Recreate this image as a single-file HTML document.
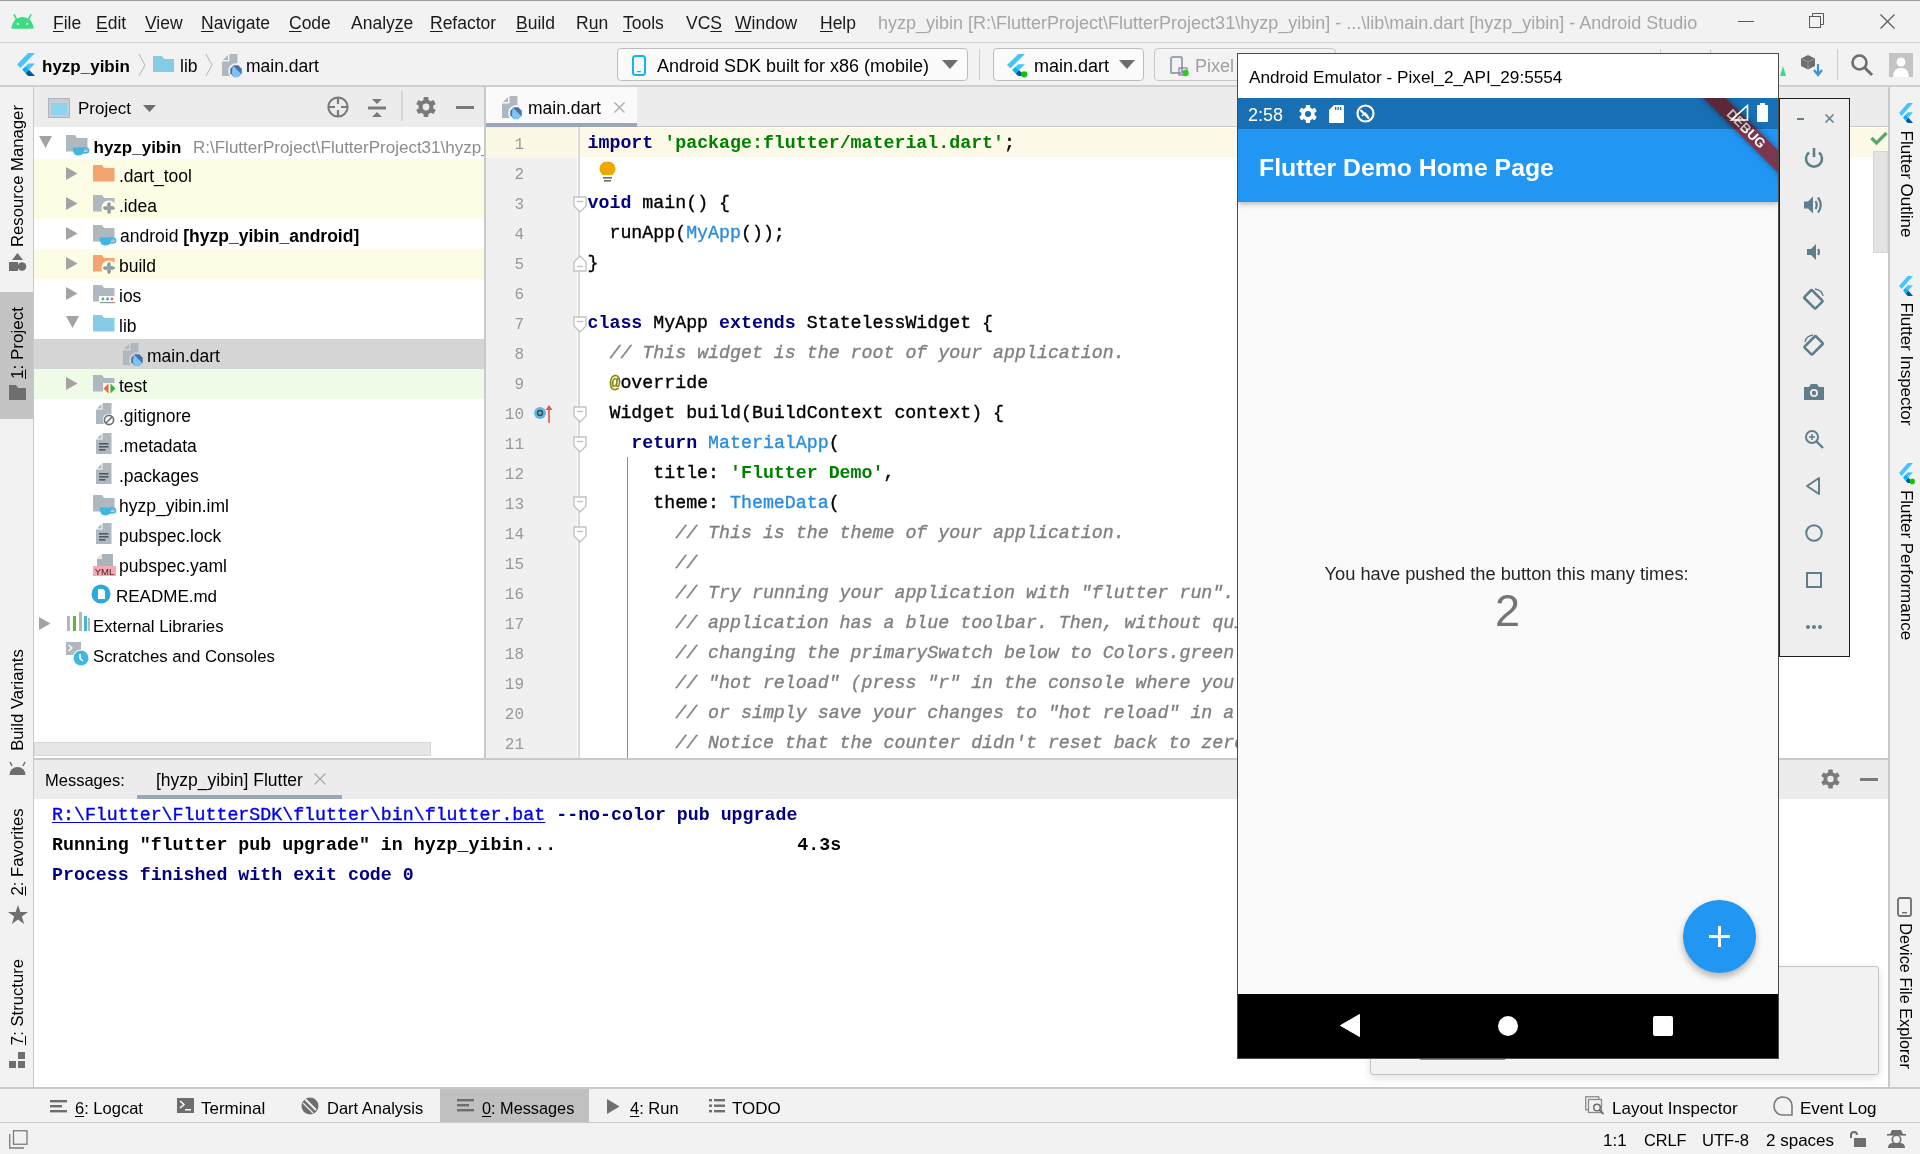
<!DOCTYPE html>
<html><head><meta charset="utf-8">
<style>
*{margin:0;padding:0;box-sizing:border-box}
html,body{width:1920px;height:1154px;overflow:hidden;background:#f2f2f2;font-family:"Liberation Sans",sans-serif;color:#000}
.a{position:absolute}
.t{position:absolute;white-space:pre}
.u{text-decoration:underline;text-decoration-thickness:1px;text-underline-offset:2px}
svg{position:absolute;overflow:visible}
#root{position:absolute;left:0;top:0;width:1920px;height:1154px;overflow:hidden;will-change:transform}
</style></head><body><div id="root">
<div class="a" style="left:0px;top:0px;width:1920px;height:1px;background:#9a9a9a;"></div>
<div class="a" style="left:0px;top:1px;width:1920px;height:41px;background:#f2f2f2;"></div>
<div class="a" style="left:0px;top:42px;width:1920px;height:1px;background:#d4d4d4;"></div>
<div class="a" style="left:0px;top:85px;width:1920px;height:2px;background:#cfcfcf;"></div>
<div class="a" style="left:33px;top:87px;width:1px;height:1001px;background:#c9c9c9;"></div>
<div class="a" style="left:0px;top:292px;width:33px;height:127px;background:#c4c4c4;"></div>
<div class="a" style="left:34px;top:87px;width:450px;height:40px;background:#ececec;"></div>
<div class="a" style="left:34px;top:127px;width:450px;height:631px;background:#fff;"></div>
<div class="a" style="left:484px;top:87px;width:2px;height:671px;background:#c9c9c9;"></div>
<div class="a" style="left:486px;top:87px;width:1402px;height:40px;background:#ececec;"></div>
<div class="a" style="left:486px;top:126px;width:1402px;height:1px;background:#c9c9c9;"></div>
<div class="a" style="left:486px;top:87px;width:151px;height:36px;background:#fafafa;"></div>
<div class="a" style="left:486px;top:123px;width:151px;height:4px;background:#9ba6b8;"></div>
<div class="a" style="left:486px;top:127px;width:1402px;height:631px;background:#fff;"></div>
<div class="a" style="left:486px;top:127px;width:91px;height:631px;background:#f0f0f0;"></div>
<div class="a" style="left:486px;top:128px;width:91px;height:30px;background:#fcf8e6;"></div>
<div class="a" style="left:580px;top:128px;width:1308px;height:29px;background:#fdf9e8;"></div>
<div class="a" style="left:578px;top:127px;width:2px;height:631px;background:#d9d9d9;"></div>
<div class="a" style="left:1888px;top:87px;width:2px;height:1001px;background:#c9c9c9;"></div>
<div class="a" style="left:34px;top:758px;width:1854px;height:2px;background:#c9c9c9;"></div>
<div class="a" style="left:34px;top:760px;width:1854px;height:39px;background:#ececec;"></div>
<div class="a" style="left:34px;top:799px;width:1854px;height:289px;background:#fff;"></div>
<div class="a" style="left:137px;top:795px;width:205px;height:4px;background:#9ba6b8;"></div>
<div class="a" style="left:0px;top:1087px;width:1920px;height:2px;background:#c9c9c9;"></div>
<div class="a" style="left:440px;top:1089px;width:149px;height:33px;background:#c0c0c0;"></div>
<div class="a" style="left:0px;top:1122px;width:1920px;height:1px;background:#c9c9c9;"></div>
<svg style="left:11px;top:13px;" width="24" height="17" viewBox="0 0 24 17"><path d="M0.3 15.8 C0.8 9 5.5 4 11.5 4 C17.5 4 22.2 9 22.7 15.8 Z" fill="#3ddc84"/><line x1="5.6" y1="6.5" x2="3.2" y2="1.8" stroke="#3ddc84" stroke-width="1.7" stroke-linecap="round"/><line x1="17.4" y1="6.5" x2="19.8" y2="1.8" stroke="#3ddc84" stroke-width="1.7" stroke-linecap="round"/><circle cx="6.8" cy="10.8" r="1.1" fill="#fff"/><circle cx="16.2" cy="10.8" r="1.1" fill="#fff"/></svg>
<div class="t" style="left:53px;top:13px;font-size:17.5px;line-height:20px;color:#1a1a1a;font-weight:normal;font-family:'Liberation Sans';"><span class="u">F</span>ile</div>
<div class="t" style="left:96px;top:13px;font-size:17.5px;line-height:20px;color:#1a1a1a;font-weight:normal;font-family:'Liberation Sans';"><span class="u">E</span>dit</div>
<div class="t" style="left:145px;top:13px;font-size:17.5px;line-height:20px;color:#1a1a1a;font-weight:normal;font-family:'Liberation Sans';"><span class="u">V</span>iew</div>
<div class="t" style="left:201px;top:13px;font-size:17.5px;line-height:20px;color:#1a1a1a;font-weight:normal;font-family:'Liberation Sans';"><span class="u">N</span>avigate</div>
<div class="t" style="left:289px;top:13px;font-size:17.5px;line-height:20px;color:#1a1a1a;font-weight:normal;font-family:'Liberation Sans';"><span class="u">C</span>ode</div>
<div class="t" style="left:351px;top:13px;font-size:17.5px;line-height:20px;color:#1a1a1a;font-weight:normal;font-family:'Liberation Sans';">Analy<span class="u">z</span>e</div>
<div class="t" style="left:430px;top:13px;font-size:17.5px;line-height:20px;color:#1a1a1a;font-weight:normal;font-family:'Liberation Sans';"><span class="u">R</span>efactor</div>
<div class="t" style="left:516px;top:13px;font-size:17.5px;line-height:20px;color:#1a1a1a;font-weight:normal;font-family:'Liberation Sans';"><span class="u">B</span>uild</div>
<div class="t" style="left:576px;top:13px;font-size:17.5px;line-height:20px;color:#1a1a1a;font-weight:normal;font-family:'Liberation Sans';">R<span class="u">u</span>n</div>
<div class="t" style="left:623px;top:13px;font-size:17.5px;line-height:20px;color:#1a1a1a;font-weight:normal;font-family:'Liberation Sans';"><span class="u">T</span>ools</div>
<div class="t" style="left:686px;top:13px;font-size:17.5px;line-height:20px;color:#1a1a1a;font-weight:normal;font-family:'Liberation Sans';">VC<span class="u">S</span></div>
<div class="t" style="left:735px;top:13px;font-size:17.5px;line-height:20px;color:#1a1a1a;font-weight:normal;font-family:'Liberation Sans';"><span class="u">W</span>indow</div>
<div class="t" style="left:820px;top:13px;font-size:17.5px;line-height:20px;color:#1a1a1a;font-weight:normal;font-family:'Liberation Sans';"><span class="u">H</span>elp</div>
<div class="t" style="left:878px;top:13px;font-size:18px;line-height:20px;color:#a6a6a6;font-weight:normal;font-family:'Liberation Sans';">hyzp_yibin [R:\FlutterProject\FlutterProject31\hyzp_yibin] - ...\lib\main.dart [hyzp_yibin] - Android Studio</div>
<div class="a" style="left:1738px;top:21px;width:16px;height:1px;background:#5a5a5a;"></div>
<svg style="left:1809px;top:13px;" width="16" height="16" viewBox="0 0 16 16"><rect x="0.5" y="3.5" width="11" height="11" fill="none" stroke="#5a5a5a" stroke-width="1"/><path d="M3.5 3.5 V0.5 H14.5 V11.5 H11.5" fill="none" stroke="#5a5a5a" stroke-width="1"/></svg>
<svg style="left:1880px;top:14px;" width="15" height="15" viewBox="0 0 15 15"><path d="M0.5 0.5 L14.5 14.5 M14.5 0.5 L0.5 14.5" stroke="#5a5a5a" stroke-width="1.2"/></svg>
<svg style="left:17px;top:53px" width="18" height="23" viewBox="9.8 10 146.8 182.2" preserveAspectRatio="none"><path d="M37.7 128.9 L9.8 101 L100.8 10 L156.6 10 Z" fill="#47c5fb"/><path d="M156.6 94 L100.8 94 L79.6 115.2 L107.5 143.1 Z" fill="#47c5fb"/><path d="M79.6 171 L100.8 192.2 L156.6 192.2 L107.5 143.1 Z" fill="#00569e"/><path d="M51.6 143.1 L79.6 115.2 L107.5 143.1 L79.6 171 Z" fill="#00b5f8"/></svg>
<div class="t" style="left:42px;top:57px;font-size:17px;line-height:20px;color:#000;font-weight:bold;font-family:'Liberation Sans';">hyzp_yibin</div>
<svg style="left:138px;top:54px;" width="8" height="22" viewBox="0 0 8 22"><path d="M1 0 L7 11 L1 22" fill="none" stroke="#b4b4b4" stroke-width="1"/></svg>
<svg style="left:153px;top:56px;" width="21" height="16" viewBox="0 0 21 16"><path d="M0 0 H8.8 L11.6 2.9 H21 V16 H0 Z" fill="#87cce6"/></svg>
<div class="t" style="left:180px;top:56px;font-size:17.5px;line-height:20px;color:#000;font-weight:normal;font-family:'Liberation Sans';">lib</div>
<svg style="left:205px;top:54px;" width="8" height="22" viewBox="0 0 8 22"><path d="M1 0 L7 11 L1 22" fill="none" stroke="#b4b4b4" stroke-width="1"/></svg>
<svg style="left:222px;top:54px;" width="22" height="23" viewBox="0 0 22 23"><path d="M1 6 L6 1 V6 Z" fill="#afb8bf"/><path d="M7.5 0 H15.5 V22 H0 V7.5 H7.5 Z" fill="#afb8bf"/><circle cx="14" cy="17" r="7.800000000000001" fill="#f2f2f2"/><polygon points="19.73,19.37 16.37,22.73 11.63,22.73 8.27,19.37 8.27,14.63 11.63,11.27 16.37,11.27 19.73,14.63" fill="#4d6fa8"/><path d="M10.8 11.6 L19.4 20.2 L16.4 23.2 L11.6 23.2 L9.8 19 Z" fill="#7cc3f8"/></svg>
<div class="t" style="left:246px;top:56px;font-size:17.5px;line-height:20px;color:#000;font-weight:normal;font-family:'Liberation Sans';">main.dart</div>
<div class="a" style="left:617px;top:48px;width:351px;height:33px;background:#fbfbfb;border:1px solid #bdbdbd;border-radius:4px"></div>
<svg style="left:632px;top:55px;" width="14" height="21" viewBox="0 0 14 21"><rect x="1" y="1" width="12" height="19" rx="2.5" fill="none" stroke="#16b3f4" stroke-width="2"/><rect x="5" y="16" width="4" height="1.2" fill="#16b3f4"/></svg>
<div class="t" style="left:657px;top:56px;font-size:18px;line-height:20px;color:#000;font-weight:normal;font-family:'Liberation Sans';">Android SDK built for x86 (mobile)</div>
<svg style="left:942px;top:60px;" width="16" height="9" viewBox="0 0 16 9"><path d="M0 0 H16 L8 9 Z" fill="#6e6e6e"/></svg>
<div class="a" style="left:979px;top:49px;width:1px;height:31px;background:#cdcdcd;"></div>
<div class="a" style="left:993px;top:48px;width:151px;height:33px;background:#fbfbfb;border:1px solid #bdbdbd;border-radius:4px"></div>
<svg style="left:1007px;top:54px" width="18" height="22" viewBox="9.8 10 146.8 182.2" preserveAspectRatio="none"><path d="M37.7 128.9 L9.8 101 L100.8 10 L156.6 10 Z" fill="#47c5fb"/><path d="M156.6 94 L100.8 94 L79.6 115.2 L107.5 143.1 Z" fill="#47c5fb"/><path d="M79.6 171 L100.8 192.2 L156.6 192.2 L107.5 143.1 Z" fill="#00569e"/><path d="M51.6 143.1 L79.6 115.2 L107.5 143.1 L79.6 171 Z" fill="#00b5f8"/><circle cx="150" cy="178" r="26" fill="#0cc400"/></svg>
<div class="t" style="left:1034px;top:56px;font-size:18px;line-height:20px;color:#000;font-weight:normal;font-family:'Liberation Sans';">main.dart</div>
<svg style="left:1119px;top:60px;" width="16" height="9" viewBox="0 0 16 9"><path d="M0 0 H16 L8 9 Z" fill="#6e6e6e"/></svg>
<div class="a" style="left:1154px;top:48px;width:182px;height:33px;background:#f3f3f3;border:1px solid #c8c8c8;border-radius:4px"></div>
<svg style="left:1170px;top:56px;" width="20" height="21" viewBox="0 0 20 21"><path d="M3 1 H10 Q12 1 12 3 V12" fill="none" stroke="#9aa7b0" stroke-width="2"/><path d="M1 3 V16 Q1 17 3 17 H6" fill="none" stroke="#9aa7b0" stroke-width="2"/><rect x="1" y="1" width="11" height="16" rx="2" fill="none" stroke="#9aa7b0" stroke-width="2"/><rect x="9" y="12" width="8" height="7" fill="none" stroke="#9b6bc6" stroke-width="1.2"/><circle cx="15.5" cy="17" r="3.2" fill="#2ecc1c"/></svg>
<div class="t" style="left:1195px;top:56px;font-size:18px;line-height:20px;color:#a0a0a0;font-weight:normal;font-family:'Liberation Sans';">Pixel 2</div>
<div class="a" style="left:1660px;top:49px;width:1px;height:31px;background:#cdcdcd;"></div>
<div class="a" style="left:1710px;top:49px;width:1px;height:31px;background:#cdcdcd;"></div>
<svg style="left:1780px;top:66px;" width="6" height="10" viewBox="0 0 6 10"><path d="M0 10 L3 0 L6 10 Z" fill="#3ddc84"/></svg>
<svg style="left:1801px;top:55px;" width="23" height="22" viewBox="0 0 23 22"><path d="M7 0 L14 3.5 V11 L7 14.5 L0 11 V3.5 Z" fill="#6e6e6e"/><path d="M0 3.5 L7 7 L14 3.5" fill="none" stroke="#9a9a9a" stroke-width="1"/><path d="M7 7 V14.5" stroke="#9a9a9a" stroke-width="1"/><path d="M17 9 V19 M13 15 L17 20 L21 15" fill="none" stroke="#3993d4" stroke-width="2.2"/></svg>
<div class="a" style="left:1837px;top:49px;width:1px;height:31px;background:#cdcdcd;"></div>
<svg style="left:1851px;top:54px;" width="22" height="22" viewBox="0 0 22 22"><circle cx="8.5" cy="8.5" r="7" fill="none" stroke="#6e6e6e" stroke-width="2.6"/><path d="M13.5 13.5 L21 21" stroke="#6e6e6e" stroke-width="3"/></svg>
<svg style="left:1889px;top:53px;" width="24" height="24" viewBox="0 0 24 24"><rect width="24" height="24" fill="#c4c4c4"/><circle cx="12" cy="9" r="4.5" fill="#fff"/><path d="M4 24 Q4 15 12 15 Q20 15 20 24 Z" fill="#fff"/></svg>
<svg style="left:48px;top:98px;" width="22" height="20" viewBox="0 0 22 20"><rect x="0.5" y="0.5" width="21" height="19" fill="#c7cfd6" stroke="#a9b4bc" stroke-width="1"/><rect x="3" y="5" width="16" height="12" fill="#8fd3ee"/></svg>
<div class="t" style="left:78px;top:99px;font-size:17px;line-height:20px;color:#000;font-weight:normal;font-family:'Liberation Sans';">Project</div>
<svg style="left:143px;top:105px;" width="13" height="7" viewBox="0 0 13 7"><path d="M0 0 H13 L6.5 7 Z" fill="#6e6e6e"/></svg>
<svg style="left:327px;top:96px;" width="22" height="22" viewBox="0 0 22 22"><circle cx="11" cy="11" r="9.6" fill="none" stroke="#7a7a7a" stroke-width="2"/><path d="M11 2 V8 M11 14 V20 M2 11 H8 M14 11 H20" stroke="#7a7a7a" stroke-width="2.2"/></svg>
<svg style="left:368px;top:98.5px;" width="19" height="20" viewBox="0 0 19 20"><path d="M0 9 H18" stroke="#7a7a7a" stroke-width="3"/><path d="M4 0 H14 L9 5 Z M4 18 H14 L9 13 Z" fill="#7a7a7a"/></svg>
<div class="a" style="left:401px;top:91px;width:2px;height:30px;background:#d6d6d6;"></div>
<svg style="left:416px;top:97px;" width="20" height="20" viewBox="0 0 20 20"><g transform="translate(10 10)"><rect x="-2.40" y="-10.00" width="4.80" height="6.00" rx="0.80" fill="#7a7a7a" transform="rotate(0)"/><rect x="-2.40" y="-10.00" width="4.80" height="6.00" rx="0.80" fill="#7a7a7a" transform="rotate(60)"/><rect x="-2.40" y="-10.00" width="4.80" height="6.00" rx="0.80" fill="#7a7a7a" transform="rotate(120)"/><rect x="-2.40" y="-10.00" width="4.80" height="6.00" rx="0.80" fill="#7a7a7a" transform="rotate(180)"/><rect x="-2.40" y="-10.00" width="4.80" height="6.00" rx="0.80" fill="#7a7a7a" transform="rotate(240)"/><rect x="-2.40" y="-10.00" width="4.80" height="6.00" rx="0.80" fill="#7a7a7a" transform="rotate(300)"/><circle r="7.40" fill="#7a7a7a"/><circle r="3.40" fill="#ececec"/></g></svg>
<div class="a" style="left:456px;top:106px;width:18px;height:3px;background:#7a7a7a;"></div>
<svg style="left:39px;top:136px;" width="13" height="12" viewBox="0 0 13 12"><path d="M0 0 H13 L6.5 12 Z" fill="#a3a3a3"/></svg>
<svg style="left:66px;top:135px;" width="22" height="17" viewBox="0 0 22 17"><path d="M0 0 H9 L11 3 H21.5 V16.5 H0 Z" fill="#afb8bf"/></svg>
<svg style="left:72px;top:147px;" width="18" height="9" viewBox="0 0 18 9"><path d="M0.5 0.5 H12.5 Q12.5 8.5 6.5 8.5 Q0.5 8.5 0.5 0.5 Z" fill="#40b6e0"/><ellipse cx="13" cy="3.5" rx="3.6" ry="2.4" fill="none" stroke="#40b6e0" stroke-width="1.6"/></svg>
<div class="t" style="left:93.5px;top:138px;font-size:17px;line-height:20px;color:#000;font-weight:bold;font-family:'Liberation Sans';">hyzp_yibin</div>
<div class="t" style="left:193px;top:138px;font-size:17px;line-height:20px;color:#8c8c8c;font-weight:normal;font-family:'Liberation Sans';width:291px;overflow:hidden">R:\FlutterProject\FlutterProject31\hyzp_yibin</div>
<div class="a" style="left:34px;top:159px;width:450px;height:60px;background:#fdfde5;"></div>
<div class="a" style="left:34px;top:249px;width:450px;height:30px;background:#fdfde5;"></div>
<div class="a" style="left:34px;top:339px;width:450px;height:30px;background:#d5d5d5;"></div>
<div class="a" style="left:34px;top:369px;width:450px;height:30px;background:#effae7;"></div>
<svg style="left:66px;top:167px;" width="12" height="13" viewBox="0 0 12 13"><path d="M0 0 L11.5 6.5 L0 13 Z" fill="#a3a3a3"/></svg>
<svg style="left:93px;top:165px;" width="22" height="17" viewBox="0 0 22 17"><path d="M0 0 H9 L11 3 H21.5 V16.5 H0 Z" fill="#f4a46f"/></svg>
<div class="t" style="left:119px;top:166px;font-size:17.5px;line-height:20px;color:#000;font-weight:normal;font-family:'Liberation Sans';">.dart_tool</div>
<svg style="left:66px;top:197px;" width="12" height="13" viewBox="0 0 12 13"><path d="M0 0 L11.5 6.5 L0 13 Z" fill="#a3a3a3"/></svg>
<svg style="left:93px;top:195px;" width="22" height="17" viewBox="0 0 22 17"><path d="M0 0 H9 L11 3 H21.5 V16.5 H0 Z" fill="#afb8bf"/></svg>
<svg style="left:102px;top:201px;" width="14" height="14" viewBox="0 0 14 14"><circle cx="7" cy="7" r="7.6" fill="#fdfde5"/><path d="M7 7 C4.2 5.8 4.4 1.6 7.6 0.9 C9.4 2.6 9.2 5.6 7 7 Z" fill="#8e9aa2" transform="rotate(0 7 7)"/><path d="M7 7 C4.2 5.8 4.4 1.6 7.6 0.9 C9.4 2.6 9.2 5.6 7 7 Z" fill="#8e9aa2" transform="rotate(90 7 7)"/><path d="M7 7 C4.2 5.8 4.4 1.6 7.6 0.9 C9.4 2.6 9.2 5.6 7 7 Z" fill="#8e9aa2" transform="rotate(180 7 7)"/><path d="M7 7 C4.2 5.8 4.4 1.6 7.6 0.9 C9.4 2.6 9.2 5.6 7 7 Z" fill="#8e9aa2" transform="rotate(270 7 7)"/></svg>
<div class="t" style="left:119px;top:196px;font-size:17.5px;line-height:20px;color:#000;font-weight:normal;font-family:'Liberation Sans';">.idea</div>
<svg style="left:66px;top:227px;" width="12" height="13" viewBox="0 0 12 13"><path d="M0 0 L11.5 6.5 L0 13 Z" fill="#a3a3a3"/></svg>
<svg style="left:93px;top:225px;" width="22" height="17" viewBox="0 0 22 17"><path d="M0 0 H9 L11 3 H21.5 V16.5 H0 Z" fill="#afb8bf"/></svg>
<svg style="left:99px;top:237px;" width="18" height="9" viewBox="0 0 18 9"><path d="M0.5 0.5 H12.5 Q12.5 8.5 6.5 8.5 Q0.5 8.5 0.5 0.5 Z" fill="#40b6e0"/><ellipse cx="13" cy="3.5" rx="3.6" ry="2.4" fill="none" stroke="#40b6e0" stroke-width="1.6"/></svg>
<div class="t" style="left:120px;top:226px;font-size:17.5px;line-height:20px;color:#000;font-weight:normal;font-family:'Liberation Sans';">android <b>[hyzp_yibin_android]</b></div>
<svg style="left:66px;top:257px;" width="12" height="13" viewBox="0 0 12 13"><path d="M0 0 L11.5 6.5 L0 13 Z" fill="#a3a3a3"/></svg>
<svg style="left:93px;top:255px;" width="22" height="17" viewBox="0 0 22 17"><path d="M0 0 H9 L11 3 H21.5 V16.5 H0 Z" fill="#f4a46f"/></svg>
<svg style="left:102px;top:261px;" width="14" height="14" viewBox="0 0 14 14"><circle cx="7" cy="7" r="7.6" fill="#fdfde5"/><path d="M7 7 C4.2 5.8 4.4 1.6 7.6 0.9 C9.4 2.6 9.2 5.6 7 7 Z" fill="#8e9aa2" transform="rotate(0 7 7)"/><path d="M7 7 C4.2 5.8 4.4 1.6 7.6 0.9 C9.4 2.6 9.2 5.6 7 7 Z" fill="#8e9aa2" transform="rotate(90 7 7)"/><path d="M7 7 C4.2 5.8 4.4 1.6 7.6 0.9 C9.4 2.6 9.2 5.6 7 7 Z" fill="#8e9aa2" transform="rotate(180 7 7)"/><path d="M7 7 C4.2 5.8 4.4 1.6 7.6 0.9 C9.4 2.6 9.2 5.6 7 7 Z" fill="#8e9aa2" transform="rotate(270 7 7)"/></svg>
<div class="t" style="left:119px;top:256px;font-size:17.5px;line-height:20px;color:#000;font-weight:normal;font-family:'Liberation Sans';">build</div>
<svg style="left:66px;top:287px;" width="12" height="13" viewBox="0 0 12 13"><path d="M0 0 L11.5 6.5 L0 13 Z" fill="#a3a3a3"/></svg>
<svg style="left:93px;top:285px;" width="22" height="17" viewBox="0 0 22 17"><path d="M0 0 H9 L11 3 H21.5 V16.5 H0 Z" fill="#afb8bf"/></svg>
<svg style="left:99px;top:296px;" width="17" height="8" viewBox="0 0 17 8"><rect width="17" height="8" fill="#fff"/><circle cx="4" cy="3" r="1.4" fill="#62b543"/><circle cx="8.5" cy="3" r="1.4" fill="#3a9bd9"/><circle cx="13" cy="3" r="1.4" fill="#e8684a"/><rect x="1" y="6" width="15" height="1.2" fill="#8a969e"/></svg>
<div class="t" style="left:119px;top:286px;font-size:17.5px;line-height:20px;color:#000;font-weight:normal;font-family:'Liberation Sans';">ios</div>
<svg style="left:66px;top:316px;" width="13" height="12" viewBox="0 0 13 12"><path d="M0 0 H13 L6.5 12 Z" fill="#a3a3a3"/></svg>
<svg style="left:93px;top:315px;" width="22" height="17" viewBox="0 0 22 17"><path d="M0 0 H9 L11 3 H21.5 V16.5 H0 Z" fill="#87cce6"/></svg>
<div class="t" style="left:119px;top:316px;font-size:17.5px;line-height:20px;color:#000;font-weight:normal;font-family:'Liberation Sans';">lib</div>
<svg style="left:123px;top:343px;" width="22" height="23" viewBox="0 0 22 23"><path d="M1 6 L6 1 V6 Z" fill="#afb8bf"/><path d="M7.5 0 H15.5 V22 H0 V7.5 H7.5 Z" fill="#afb8bf"/><circle cx="14" cy="17" r="7.800000000000001" fill="#d5d5d5"/><polygon points="19.73,19.37 16.37,22.73 11.63,22.73 8.27,19.37 8.27,14.63 11.63,11.27 16.37,11.27 19.73,14.63" fill="#4d6fa8"/><path d="M10.8 11.6 L19.4 20.2 L16.4 23.2 L11.6 23.2 L9.8 19 Z" fill="#7cc3f8"/></svg>
<div class="t" style="left:147px;top:346px;font-size:17.5px;line-height:20px;color:#000;font-weight:normal;font-family:'Liberation Sans';">main.dart</div>
<svg style="left:66px;top:377px;" width="12" height="13" viewBox="0 0 12 13"><path d="M0 0 L11.5 6.5 L0 13 Z" fill="#a3a3a3"/></svg>
<svg style="left:93px;top:375px;" width="22" height="17" viewBox="0 0 22 17"><path d="M0 0 H9 L11 3 H21.5 V16.5 H0 Z" fill="#afb8bf"/></svg>
<svg style="left:102.5px;top:383px;" width="13" height="11" viewBox="0 0 13 11"><rect width="13" height="11" fill="#effae7"/><path d="M5.5 0.5 L0.5 5.5 L5.5 10.5 Z" fill="#e8684a"/><path d="M7.5 0.5 L12.5 5.5 L7.5 10.5 Z" fill="#3fad3f"/></svg>
<div class="t" style="left:119px;top:376px;font-size:17.5px;line-height:20px;color:#000;font-weight:normal;font-family:'Liberation Sans';">test</div>
<svg style="left:96px;top:403px;" width="16" height="21" viewBox="0 0 16 21"><path d="M1 5.5 L5.5 1 V5.5 Z" fill="#afb8bf"/><path d="M6.5 0 H15.5 V21 H0 V6.5 H6.5 Z" fill="#afb8bf"/><circle cx="13" cy="17" r="6.2" fill="#fff"/><circle cx="13" cy="17" r="4.6" fill="none" stroke="#6e6e6e" stroke-width="1.7"/><path d="M10 20 L16 14" stroke="#6e6e6e" stroke-width="1.7"/></svg>
<div class="t" style="left:119px;top:406px;font-size:17.5px;line-height:20px;color:#000;font-weight:normal;font-family:'Liberation Sans';">.gitignore</div>
<svg style="left:96px;top:433px;" width="16" height="21" viewBox="0 0 16 21"><path d="M1 5.5 L5.5 1 V5.5 Z" fill="#afb8bf"/><path d="M6.5 0 H15.5 V21 H0 V6.5 H6.5 Z" fill="#afb8bf"/><rect x="3" y="10" width="9.5" height="1.6" fill="#4e5a62"/><rect x="3" y="13" width="9.5" height="1.6" fill="#4e5a62"/><rect x="3" y="16" width="6.5" height="1.6" fill="#4e5a62"/></svg>
<div class="t" style="left:119px;top:436px;font-size:17.5px;line-height:20px;color:#000;font-weight:normal;font-family:'Liberation Sans';">.metadata</div>
<svg style="left:96px;top:463px;" width="16" height="21" viewBox="0 0 16 21"><path d="M1 5.5 L5.5 1 V5.5 Z" fill="#afb8bf"/><path d="M6.5 0 H15.5 V21 H0 V6.5 H6.5 Z" fill="#afb8bf"/><rect x="3" y="10" width="9.5" height="1.6" fill="#4e5a62"/><rect x="3" y="13" width="9.5" height="1.6" fill="#4e5a62"/><rect x="3" y="16" width="6.5" height="1.6" fill="#4e5a62"/></svg>
<div class="t" style="left:119px;top:466px;font-size:17.5px;line-height:20px;color:#000;font-weight:normal;font-family:'Liberation Sans';">.packages</div>
<svg style="left:93px;top:495px;" width="22" height="17" viewBox="0 0 22 17"><path d="M0 0 H9 L11 3 H21.5 V16.5 H0 Z" fill="#afb8bf"/></svg>
<svg style="left:99px;top:507px;" width="18" height="9" viewBox="0 0 18 9"><path d="M0.5 0.5 H12.5 Q12.5 8.5 6.5 8.5 Q0.5 8.5 0.5 0.5 Z" fill="#40b6e0"/><ellipse cx="13" cy="3.5" rx="3.6" ry="2.4" fill="none" stroke="#40b6e0" stroke-width="1.6"/></svg>
<div class="t" style="left:119px;top:496px;font-size:17.5px;line-height:20px;color:#000;font-weight:normal;font-family:'Liberation Sans';">hyzp_yibin.iml</div>
<svg style="left:96px;top:523px;" width="16" height="21" viewBox="0 0 16 21"><path d="M1 5.5 L5.5 1 V5.5 Z" fill="#afb8bf"/><path d="M6.5 0 H15.5 V21 H0 V6.5 H6.5 Z" fill="#afb8bf"/><rect x="3" y="10" width="9.5" height="1.6" fill="#4e5a62"/><rect x="3" y="13" width="9.5" height="1.6" fill="#4e5a62"/><rect x="3" y="16" width="6.5" height="1.6" fill="#4e5a62"/></svg>
<div class="t" style="left:119px;top:526px;font-size:17.5px;line-height:20px;color:#000;font-weight:normal;font-family:'Liberation Sans';">pubspec.lock</div>
<svg style="left:93px;top:554px;" width="23" height="22" viewBox="0 0 23 22"><path d="M9 0 H20 V12 H4 V5 Z" fill="#a9b4bc"/><path d="M4 5 L9 0 V5 Z" fill="#e3e7ea"/><rect x="0" y="12" width="23" height="10" fill="#f4a9b4"/><text x="11.5" y="20.5" text-anchor="middle" font-family="Liberation Sans" font-size="9.5" fill="#4a1a22">YML</text></svg>
<div class="t" style="left:119px;top:556px;font-size:17.5px;line-height:20px;color:#000;font-weight:normal;font-family:'Liberation Sans';">pubspec.yaml</div>
<svg style="left:91px;top:584px;" width="20" height="20" viewBox="0 0 20 20"><circle cx="10" cy="10" r="9.5" fill="#2fa8dc"/><path d="M7 5 H12 L14 7 V15 H7 Z" fill="#fff"/></svg>
<div class="t" style="left:116px;top:587px;font-size:17px;line-height:20px;color:#000;font-weight:normal;font-family:'Liberation Sans';">README.md</div>
<svg style="left:39px;top:617px;" width="12" height="13" viewBox="0 0 12 13"><path d="M0 0 L11.5 6.5 L0 13 Z" fill="#a3a3a3"/></svg>
<svg style="left:67px;top:612px;" width="22" height="19" viewBox="0 0 22 19"><rect x="0" y="4" width="3" height="15" fill="#afb8bf"/><rect x="6" y="4" width="3" height="15" fill="#62b543"/><rect x="12" y="0" width="3" height="19" fill="#afb8bf"/><rect x="17" y="4" width="3" height="15" fill="#40b6e0"/><rect x="21" y="6" width="2" height="13" fill="#afb8bf"/></svg>
<div class="t" style="left:93px;top:617px;font-size:16.8px;line-height:20px;color:#000;font-weight:normal;font-family:'Liberation Sans';">External Libraries</div>
<svg style="left:66px;top:642px;" width="23" height="24" viewBox="0 0 23 24"><rect x="0" y="0" width="15" height="13" fill="#afb8bf"/><path d="M2.5 3 L6 6 L2.5 9" fill="none" stroke="#fff" stroke-width="1.3"/><circle cx="15" cy="16" r="8.5" fill="#fff"/><circle cx="15" cy="16" r="7.5" fill="#40b6e0"/><path d="M14 12 V16.5 L17 19" fill="none" stroke="#fff" stroke-width="1.6"/></svg>
<div class="t" style="left:93px;top:647px;font-size:16.8px;line-height:20px;color:#000;font-weight:normal;font-family:'Liberation Sans';">Scratches and Consoles</div>
<div class="a" style="left:34px;top:742px;width:397px;height:14px;background:#e6e6e6;border:1px solid #d6d6d6"></div>
<svg style="left:502px;top:96px;" width="22" height="23" viewBox="0 0 22 23"><path d="M1 6 L6 1 V6 Z" fill="#afb8bf"/><path d="M7.5 0 H15.5 V22 H0 V7.5 H7.5 Z" fill="#afb8bf"/><circle cx="14" cy="17" r="7.800000000000001" fill="#fafafa"/><polygon points="19.73,19.37 16.37,22.73 11.63,22.73 8.27,19.37 8.27,14.63 11.63,11.27 16.37,11.27 19.73,14.63" fill="#4d6fa8"/><path d="M10.8 11.6 L19.4 20.2 L16.4 23.2 L11.6 23.2 L9.8 19 Z" fill="#7cc3f8"/></svg>
<div class="t" style="left:528px;top:98px;font-size:17.5px;line-height:20px;color:#000;font-weight:normal;font-family:'Liberation Sans';">main.dart</div>
<svg style="left:614px;top:102px;" width="11" height="11" viewBox="0 0 11 11"><path d="M0.5 0.5 L10.5 10.5 M10.5 0.5 L0.5 10.5" stroke="#a8a8a8" stroke-width="1.3"/></svg>
<div class="t" style="left:514.4px;top:130px;font-size:16px;line-height:30px;color:#999999;font-weight:normal;font-family:'Liberation Mono';">1</div>
<div class="t" style="left:514.4px;top:160px;font-size:16px;line-height:30px;color:#999999;font-weight:normal;font-family:'Liberation Mono';">2</div>
<div class="t" style="left:514.4px;top:190px;font-size:16px;line-height:30px;color:#999999;font-weight:normal;font-family:'Liberation Mono';">3</div>
<div class="t" style="left:514.4px;top:220px;font-size:16px;line-height:30px;color:#999999;font-weight:normal;font-family:'Liberation Mono';">4</div>
<div class="t" style="left:514.4px;top:250px;font-size:16px;line-height:30px;color:#999999;font-weight:normal;font-family:'Liberation Mono';">5</div>
<div class="t" style="left:514.4px;top:280px;font-size:16px;line-height:30px;color:#999999;font-weight:normal;font-family:'Liberation Mono';">6</div>
<div class="t" style="left:514.4px;top:310px;font-size:16px;line-height:30px;color:#999999;font-weight:normal;font-family:'Liberation Mono';">7</div>
<div class="t" style="left:514.4px;top:340px;font-size:16px;line-height:30px;color:#999999;font-weight:normal;font-family:'Liberation Mono';">8</div>
<div class="t" style="left:514.4px;top:370px;font-size:16px;line-height:30px;color:#999999;font-weight:normal;font-family:'Liberation Mono';">9</div>
<div class="t" style="left:504.8px;top:400px;font-size:16px;line-height:30px;color:#999999;font-weight:normal;font-family:'Liberation Mono';">10</div>
<div class="t" style="left:504.8px;top:430px;font-size:16px;line-height:30px;color:#999999;font-weight:normal;font-family:'Liberation Mono';">11</div>
<div class="t" style="left:504.8px;top:460px;font-size:16px;line-height:30px;color:#999999;font-weight:normal;font-family:'Liberation Mono';">12</div>
<div class="t" style="left:504.8px;top:490px;font-size:16px;line-height:30px;color:#999999;font-weight:normal;font-family:'Liberation Mono';">13</div>
<div class="t" style="left:504.8px;top:520px;font-size:16px;line-height:30px;color:#999999;font-weight:normal;font-family:'Liberation Mono';">14</div>
<div class="t" style="left:504.8px;top:550px;font-size:16px;line-height:30px;color:#999999;font-weight:normal;font-family:'Liberation Mono';">15</div>
<div class="t" style="left:504.8px;top:580px;font-size:16px;line-height:30px;color:#999999;font-weight:normal;font-family:'Liberation Mono';">16</div>
<div class="t" style="left:504.8px;top:610px;font-size:16px;line-height:30px;color:#999999;font-weight:normal;font-family:'Liberation Mono';">17</div>
<div class="t" style="left:504.8px;top:640px;font-size:16px;line-height:30px;color:#999999;font-weight:normal;font-family:'Liberation Mono';">18</div>
<div class="t" style="left:504.8px;top:670px;font-size:16px;line-height:30px;color:#999999;font-weight:normal;font-family:'Liberation Mono';">19</div>
<div class="t" style="left:504.8px;top:700px;font-size:16px;line-height:30px;color:#999999;font-weight:normal;font-family:'Liberation Mono';">20</div>
<div class="t" style="left:504.8px;top:730px;font-size:16px;line-height:30px;color:#999999;font-weight:normal;font-family:'Liberation Mono';">21</div>
<div class="a" style="left:580px;top:127px;width:657px;height:631px;overflow:hidden">
<div class="t" style="left:7.5px;top:1px;font-family:'Liberation Mono';font-size:18.27px;line-height:30px;color:#000;-webkit-text-stroke:0.35px currentColor"><span style="color:#000080;font-weight:bold;-webkit-text-stroke:0px">import</span> <span style="color:#008000;font-weight:bold;-webkit-text-stroke:0px">'package:flutter/material.dart'</span>;</div>
<div class="t" style="left:7.5px;top:31px;font-family:'Liberation Mono';font-size:18.27px;line-height:30px;color:#000;-webkit-text-stroke:0.35px currentColor"></div>
<div class="t" style="left:7.5px;top:61px;font-family:'Liberation Mono';font-size:18.27px;line-height:30px;color:#000;-webkit-text-stroke:0.35px currentColor"><span style="color:#000080;font-weight:bold;-webkit-text-stroke:0px">void</span> main() {</div>
<div class="t" style="left:7.5px;top:91px;font-family:'Liberation Mono';font-size:18.27px;line-height:30px;color:#000;-webkit-text-stroke:0.35px currentColor">  runApp(<span style="color:#2a8ce0">MyApp</span>());</div>
<div class="t" style="left:7.5px;top:121px;font-family:'Liberation Mono';font-size:18.27px;line-height:30px;color:#000;-webkit-text-stroke:0.35px currentColor">}</div>
<div class="t" style="left:7.5px;top:151px;font-family:'Liberation Mono';font-size:18.27px;line-height:30px;color:#000;-webkit-text-stroke:0.35px currentColor"></div>
<div class="t" style="left:7.5px;top:181px;font-family:'Liberation Mono';font-size:18.27px;line-height:30px;color:#000;-webkit-text-stroke:0.35px currentColor"><span style="color:#000080;font-weight:bold;-webkit-text-stroke:0px">class</span> MyApp <span style="color:#000080;font-weight:bold;-webkit-text-stroke:0px">extends</span> StatelessWidget {</div>
<div class="t" style="left:7.5px;top:211px;font-family:'Liberation Mono';font-size:18.27px;line-height:30px;color:#000;-webkit-text-stroke:0.35px currentColor">  <span style="color:#808080;font-style:italic">// This widget is the root of your application.</span></div>
<div class="t" style="left:7.5px;top:241px;font-family:'Liberation Mono';font-size:18.27px;line-height:30px;color:#000;-webkit-text-stroke:0.35px currentColor">  <span style="color:#808000">@</span>override</div>
<div class="t" style="left:7.5px;top:271px;font-family:'Liberation Mono';font-size:18.27px;line-height:30px;color:#000;-webkit-text-stroke:0.35px currentColor">  Widget build(BuildContext context) {</div>
<div class="t" style="left:7.5px;top:301px;font-family:'Liberation Mono';font-size:18.27px;line-height:30px;color:#000;-webkit-text-stroke:0.35px currentColor">    <span style="color:#000080;font-weight:bold;-webkit-text-stroke:0px">return</span> <span style="color:#2a8ce0">MaterialApp</span>(</div>
<div class="t" style="left:7.5px;top:331px;font-family:'Liberation Mono';font-size:18.27px;line-height:30px;color:#000;-webkit-text-stroke:0.35px currentColor">      title: <span style="color:#008000;font-weight:bold;-webkit-text-stroke:0px">'Flutter Demo'</span>,</div>
<div class="t" style="left:7.5px;top:361px;font-family:'Liberation Mono';font-size:18.27px;line-height:30px;color:#000;-webkit-text-stroke:0.35px currentColor">      theme: <span style="color:#2a8ce0">ThemeData</span>(</div>
<div class="t" style="left:7.5px;top:391px;font-family:'Liberation Mono';font-size:18.27px;line-height:30px;color:#000;-webkit-text-stroke:0.35px currentColor">        <span style="color:#808080;font-style:italic">// This is the theme of your application.</span></div>
<div class="t" style="left:7.5px;top:421px;font-family:'Liberation Mono';font-size:18.27px;line-height:30px;color:#000;-webkit-text-stroke:0.35px currentColor">        <span style="color:#808080;font-style:italic">//</span></div>
<div class="t" style="left:7.5px;top:451px;font-family:'Liberation Mono';font-size:18.27px;line-height:30px;color:#000;-webkit-text-stroke:0.35px currentColor">        <span style="color:#808080;font-style:italic">// Try running your application with "flutter run". You'll see the</span></div>
<div class="t" style="left:7.5px;top:481px;font-family:'Liberation Mono';font-size:18.27px;line-height:30px;color:#000;-webkit-text-stroke:0.35px currentColor">        <span style="color:#808080;font-style:italic">// application has a blue toolbar. Then, without quitting the app, try</span></div>
<div class="t" style="left:7.5px;top:511px;font-family:'Liberation Mono';font-size:18.27px;line-height:30px;color:#000;-webkit-text-stroke:0.35px currentColor">        <span style="color:#808080;font-style:italic">// changing the primarySwatch below to Colors.green and then invoke</span></div>
<div class="t" style="left:7.5px;top:541px;font-family:'Liberation Mono';font-size:18.27px;line-height:30px;color:#000;-webkit-text-stroke:0.35px currentColor">        <span style="color:#808080;font-style:italic">// "hot reload" (press "r" in the console where you ran "flutter run",</span></div>
<div class="t" style="left:7.5px;top:571px;font-family:'Liberation Mono';font-size:18.27px;line-height:30px;color:#000;-webkit-text-stroke:0.35px currentColor">        <span style="color:#808080;font-style:italic">// or simply save your changes to "hot reload" in a Flutter IDE).</span></div>
<div class="t" style="left:7.5px;top:601px;font-family:'Liberation Mono';font-size:18.27px;line-height:30px;color:#000;-webkit-text-stroke:0.35px currentColor">        <span style="color:#808080;font-style:italic">// Notice that the counter didn't reset back to zero; the application</span></div>
</div>
<svg style="left:599px;top:161px;" width="17" height="21" viewBox="0 0 17 21"><path d="M8.5 0.5 C3.5 0.5 0.5 4 0.5 8 C0.5 11 2.5 12.5 3.5 14 H13.5 C14.5 12.5 16.5 11 16.5 8 C16.5 4 13.5 0.5 8.5 0.5 Z" fill="#eea800"/><rect x="4" y="16" width="9" height="1.6" fill="#6e6e6e"/><rect x="5" y="19" width="7" height="1.6" fill="#6e6e6e"/></svg>
<svg style="left:573px;top:196px;" width="14" height="17" viewBox="0 0 14 17"><path d="M1 1 H13 V10 L7 16 L1 10 Z" fill="#fff" stroke="#c2c2c2" stroke-width="1.4"/><path d="M4 5.5 H10" stroke="#c2c2c2" stroke-width="1.4"/></svg>
<svg style="left:573px;top:316px;" width="14" height="17" viewBox="0 0 14 17"><path d="M1 1 H13 V10 L7 16 L1 10 Z" fill="#fff" stroke="#c2c2c2" stroke-width="1.4"/><path d="M4 5.5 H10" stroke="#c2c2c2" stroke-width="1.4"/></svg>
<svg style="left:573px;top:406px;" width="14" height="17" viewBox="0 0 14 17"><path d="M1 1 H13 V10 L7 16 L1 10 Z" fill="#fff" stroke="#c2c2c2" stroke-width="1.4"/><path d="M4 5.5 H10" stroke="#c2c2c2" stroke-width="1.4"/></svg>
<svg style="left:573px;top:436px;" width="14" height="17" viewBox="0 0 14 17"><path d="M1 1 H13 V10 L7 16 L1 10 Z" fill="#fff" stroke="#c2c2c2" stroke-width="1.4"/><path d="M4 5.5 H10" stroke="#c2c2c2" stroke-width="1.4"/></svg>
<svg style="left:573px;top:496px;" width="14" height="17" viewBox="0 0 14 17"><path d="M1 1 H13 V10 L7 16 L1 10 Z" fill="#fff" stroke="#c2c2c2" stroke-width="1.4"/><path d="M4 5.5 H10" stroke="#c2c2c2" stroke-width="1.4"/></svg>
<svg style="left:573px;top:526px;" width="14" height="17" viewBox="0 0 14 17"><path d="M1 1 H13 V10 L7 16 L1 10 Z" fill="#fff" stroke="#c2c2c2" stroke-width="1.4"/><path d="M4 5.5 H10" stroke="#c2c2c2" stroke-width="1.4"/></svg>
<svg style="left:573px;top:255px;" width="14" height="17" viewBox="0 0 14 17"><path d="M1 16 H13 V7 L7 1 L1 7 Z" fill="#fff" stroke="#c2c2c2" stroke-width="1.4"/><path d="M4 11.5 H10" stroke="#c2c2c2" stroke-width="1.4"/></svg>
<svg style="left:534px;top:404px;" width="19" height="19" viewBox="0 0 19 19"><circle cx="6" cy="9" r="6" fill="#62b8e0"/><circle cx="6" cy="9" r="2.5" fill="none" stroke="#3a4a55" stroke-width="1.4"/><path d="M15 19 V3" stroke="#e05555" stroke-width="1.6"/><path d="M11.5 6 L15 1 L18.5 6 Z" fill="#e05555"/></svg>
<div class="a" style="left:627px;top:457px;width:1px;height:301px;background:#8c8c8c;"></div>
<svg style="left:1870px;top:131px;" width="18" height="14" viewBox="0 0 18 14"><path d="M1.5 7 L6.5 12 L16.5 2" fill="none" stroke="#59a869" stroke-width="3.2"/></svg>
<div class="a" style="left:1873px;top:151px;width:15px;height:102px;background:#e3e3e3;border:1px solid #d6d6d6"></div>
<div class="t" style="left:45px;top:770px;font-size:16.5px;line-height:20px;color:#000;font-weight:normal;font-family:'Liberation Sans';">Messages:</div>
<div class="t" style="left:156px;top:770px;font-size:17.5px;line-height:20px;color:#000;font-weight:normal;font-family:'Liberation Sans';">[hyzp_yibin] Flutter</div>
<svg style="left:314px;top:773px;" width="12" height="12" viewBox="0 0 12 12"><path d="M0.5 0.5 L11.5 11.5 M11.5 0.5 L0.5 11.5" stroke="#a8a8a8" stroke-width="1.3"/></svg>
<svg style="left:1821px;top:769px;" width="19" height="20" viewBox="0 0 19 20"><g transform="translate(9.5 10)"><rect x="-2.28" y="-9.50" width="4.56" height="5.70" rx="0.76" fill="#7a7a7a" transform="rotate(0)"/><rect x="-2.28" y="-9.50" width="4.56" height="5.70" rx="0.76" fill="#7a7a7a" transform="rotate(60)"/><rect x="-2.28" y="-9.50" width="4.56" height="5.70" rx="0.76" fill="#7a7a7a" transform="rotate(120)"/><rect x="-2.28" y="-9.50" width="4.56" height="5.70" rx="0.76" fill="#7a7a7a" transform="rotate(180)"/><rect x="-2.28" y="-9.50" width="4.56" height="5.70" rx="0.76" fill="#7a7a7a" transform="rotate(240)"/><rect x="-2.28" y="-9.50" width="4.56" height="5.70" rx="0.76" fill="#7a7a7a" transform="rotate(300)"/><circle r="7.03" fill="#7a7a7a"/><circle r="3.23" fill="#ececec"/></g></svg>
<div class="a" style="left:1860px;top:778px;width:18px;height:3px;background:#7a7a7a;"></div>
<div class="t" style="left:52px;top:800px;font-family:'Liberation Mono';font-size:18.27px;line-height:30px;font-weight:bold;color:#000080"><span style="color:#0000ee;text-decoration:underline;text-underline-offset:2px;text-decoration-thickness:1px;font-weight:normal;-webkit-text-stroke:0.35px currentColor">R:\Flutter\FlutterSDK\flutter\bin\flutter.bat</span> --no-color pub upgrade</div>
<div class="t" style="left:52px;top:830px;font-family:'Liberation Mono';font-size:18.27px;line-height:30px;font-weight:bold;color:#000">Running "flutter pub upgrade" in hyzp_yibin...                      4.3s</div>
<div class="t" style="left:52px;top:860px;font-family:'Liberation Mono';font-size:18.27px;line-height:30px;font-weight:bold;color:#000080">Process finished with exit code 0</div>
<svg style="left:50px;top:1100px;" width="18" height="13" viewBox="0 0 18 13"><rect x="0" y="0" width="17" height="2.4" fill="#6e6e6e"/><rect x="0" y="5" width="12" height="2.4" fill="#6e6e6e"/><rect x="0" y="10" width="17" height="2.4" fill="#6e6e6e"/></svg>
<div class="t" style="left:75px;top:1098px;font-size:16.5px;line-height:20px;color:#000;font-weight:normal;font-family:'Liberation Sans';"><span class="u">6</span>: Logcat</div>
<svg style="left:177px;top:1098px;" width="17" height="15" viewBox="0 0 17 15"><rect width="17" height="15" fill="#6e6e6e"/><path d="M3 3 L7 6.5 L3 10" fill="none" stroke="#fff" stroke-width="1.5"/><rect x="8" y="11" width="6" height="1.5" fill="#fff"/></svg>
<div class="t" style="left:201px;top:1099px;font-size:17px;line-height:20px;color:#000;font-weight:normal;font-family:'Liberation Sans';">Terminal</div>
<svg style="left:301px;top:1097px;" width="18" height="18" viewBox="0 0 18 18"><circle cx="9" cy="9" r="8.5" fill="#6e6e6e"/><path d="M4 2 L15 13" stroke="#f2f2f2" stroke-width="2"/><path d="M2 6 L12 16" stroke="#f2f2f2" stroke-width="1.2"/></svg>
<div class="t" style="left:327px;top:1098px;font-size:16.5px;line-height:20px;color:#000;font-weight:normal;font-family:'Liberation Sans';">Dart Analysis</div>
<svg style="left:457px;top:1099px;" width="18" height="13" viewBox="0 0 18 13"><rect x="0" y="0" width="17" height="2.4" fill="#6e6e6e"/><rect x="0" y="5" width="12" height="2.4" fill="#6e6e6e"/><rect x="0" y="10" width="17" height="2.4" fill="#6e6e6e"/></svg>
<div class="t" style="left:482px;top:1098px;font-size:16.3px;line-height:20px;color:#000;font-weight:normal;font-family:'Liberation Sans';"><span class="u">0</span>: Messages</div>
<svg style="left:607px;top:1099px;" width="13" height="15" viewBox="0 0 13 15"><path d="M0 0 L12.5 7.5 L0 15 Z" fill="#6e6e6e"/></svg>
<div class="t" style="left:630px;top:1098px;font-size:16.5px;line-height:20px;color:#000;font-weight:normal;font-family:'Liberation Sans';"><span class="u">4</span>: Run</div>
<svg style="left:709px;top:1099px;" width="16" height="14" viewBox="0 0 16 14"><rect x="0" y="0" width="3" height="2.4" fill="#6e6e6e"/><rect x="5" y="0" width="11" height="2.4" fill="#6e6e6e"/><rect x="0" y="5.5" width="3" height="2.4" fill="#6e6e6e"/><rect x="5" y="5.5" width="11" height="2.4" fill="#6e6e6e"/><rect x="0" y="11" width="3" height="2.4" fill="#6e6e6e"/><rect x="5" y="11" width="11" height="2.4" fill="#6e6e6e"/></svg>
<div class="t" style="left:732px;top:1099px;font-size:17px;line-height:20px;color:#000;font-weight:normal;font-family:'Liberation Sans';">TODO</div>
<svg style="left:1585px;top:1096px;" width="20" height="19" viewBox="0 0 20 19"><rect x="0.75" y="0.75" width="13" height="13" fill="none" stroke="#8a8a8a" stroke-width="1.3"/><rect x="3.5" y="3.5" width="13" height="13" fill="#f2f2f2" stroke="#8a8a8a" stroke-width="1.3"/><circle cx="12" cy="11.5" r="3.3" fill="#f2f2f2" stroke="#6e6e6e" stroke-width="1.5"/><path d="M14.3 13.8 L18.5 18" stroke="#6e6e6e" stroke-width="1.8"/></svg>
<div class="t" style="left:1612px;top:1099px;font-size:17px;line-height:20px;color:#000;font-weight:normal;font-family:'Liberation Sans';">Layout Inspector</div>
<svg style="left:1773px;top:1096px;" width="20" height="20" viewBox="0 0 20 20"><path d="M10 1 C4.5 1 1 5 1 10 C1 15 4.5 19 10 19 H19 V10 C19 5 15.5 1 10 1 Z" fill="none" stroke="#7a7a7a" stroke-width="1.6"/></svg>
<div class="t" style="left:1800px;top:1099px;font-size:17px;line-height:20px;color:#000;font-weight:normal;font-family:'Liberation Sans';">Event Log</div>
<svg style="left:9px;top:1130px;" width="19" height="19" viewBox="0 0 19 19"><rect x="4.5" y="0.75" width="13.5" height="13.5" fill="none" stroke="#7a7a7a" stroke-width="1.3"/><path d="M0.75 4 V18 H15" fill="none" stroke="#7a7a7a" stroke-width="1.3"/></svg>
<div class="t" style="left:1603px;top:1131px;font-size:17px;line-height:20px;color:#000;font-weight:normal;font-family:'Liberation Sans';">1:1</div>
<div class="t" style="left:1644px;top:1130px;font-size:16.3px;line-height:20px;color:#000;font-weight:normal;font-family:'Liberation Sans';">CRLF</div>
<div class="t" style="left:1702px;top:1131px;font-size:16.6px;line-height:20px;color:#000;font-weight:normal;font-family:'Liberation Sans';">UTF-8</div>
<div class="t" style="left:1766px;top:1131px;font-size:17px;line-height:20px;color:#000;font-weight:normal;font-family:'Liberation Sans';">2 spaces</div>
<svg style="left:1849px;top:1130px;" width="18" height="17" viewBox="0 0 18 17"><path d="M2 8 V5 C2 1 8 1 8 5" fill="none" stroke="#6e6e6e" stroke-width="2"/><rect x="5" y="8" width="12" height="9" fill="#6e6e6e"/></svg>
<svg style="left:1887px;top:1129px;" width="19" height="19" viewBox="0 0 19 19"><path d="M3 5 H16 L14 1 H5 Z" fill="#6e6e6e"/><rect x="0" y="5" width="19" height="1.6" fill="#6e6e6e"/><circle cx="9.5" cy="10.5" r="4.2" fill="none" stroke="#6e6e6e" stroke-width="1.6"/><path d="M1 19 Q1 14 6 14 H13 Q18 14 18 19 Z" fill="#6e6e6e"/></svg>
<div class="t" style="left:18px;top:176.0px;font-size:16.7px;line-height:20px;color:#000;transform:translate(-50%,-50%) rotate(-90deg)">Resource Manager</div>
<svg style="left:9px;top:253px;" width="17" height="19" viewBox="0 0 17 19"><path d="M8.5 0 L14 7 H3 Z" fill="#6e6e6e"/><rect x="0" y="9" width="9" height="9" fill="#6e6e6e"/><circle cx="13" cy="13.5" r="4.3" fill="#6e6e6e"/></svg>
<div class="t" style="left:18px;top:342.5px;font-size:17px;line-height:20px;color:#000;transform:translate(-50%,-50%) rotate(-90deg)"><span class="u">1</span>: Project</div>
<svg style="left:9px;top:385px;" width="17" height="15" viewBox="0 0 17 15"><path d="M0 0 H7 L9 3 H17 V15 H0 Z" fill="#6e6e6e"/></svg>
<div class="t" style="left:18px;top:700.0px;font-size:16.7px;line-height:20px;color:#000;transform:translate(-50%,-50%) rotate(-90deg)">Build Variants</div>
<svg style="left:9px;top:761px;" width="17" height="14" viewBox="0 0 17 14"><path d="M0.5 14 A8 8 0 0 1 16.5 14 Z" fill="#6e6e6e"/><path d="M3 5 L1 1 M14 5 L16 1" stroke="#6e6e6e" stroke-width="1.5"/></svg>
<div class="t" style="left:18px;top:852.0px;font-size:16.7px;line-height:20px;color:#000;transform:translate(-50%,-50%) rotate(-90deg)"><span class="u">2</span>: Favorites</div>
<svg style="left:8px;top:905px;" width="20" height="20" viewBox="0 0 20 20"><path d="M10 0 L12.4 7 H20 L13.8 11.4 L16.2 19 L10 14.4 L3.8 19 L6.2 11.4 L0 7 H7.6 Z" fill="#6e6e6e"/></svg>
<div class="t" style="left:18px;top:1002.0px;font-size:16.7px;line-height:20px;color:#000;transform:translate(-50%,-50%) rotate(-90deg)"><span class="u">7</span>: Structure</div>
<svg style="left:9px;top:1052px;" width="17" height="16" viewBox="0 0 17 16"><rect x="9" y="0" width="7" height="7" fill="#6e6e6e"/><rect x="0" y="9" width="7" height="7" fill="#6e6e6e"/><rect x="9" y="9" width="7" height="7" fill="#6e6e6e"/></svg>
<svg style="left:1899px;top:103px" width="14" height="20" viewBox="9.8 10 146.8 182.2" preserveAspectRatio="none"><path d="M37.7 128.9 L9.8 101 L100.8 10 L156.6 10 Z" fill="#47c5fb"/><path d="M156.6 94 L100.8 94 L79.6 115.2 L107.5 143.1 Z" fill="#47c5fb"/><path d="M79.6 171 L100.8 192.2 L156.6 192.2 L107.5 143.1 Z" fill="#00569e"/><path d="M51.6 143.1 L79.6 115.2 L107.5 143.1 L79.6 171 Z" fill="#00b5f8"/></svg>
<div class="t" style="left:1906px;top:184.0px;font-size:17px;line-height:20px;color:#000;transform:translate(-50%,-50%) rotate(90deg)">Flutter Outline</div>
<svg style="left:1899px;top:276px" width="14" height="20" viewBox="9.8 10 146.8 182.2" preserveAspectRatio="none"><path d="M37.7 128.9 L9.8 101 L100.8 10 L156.6 10 Z" fill="#47c5fb"/><path d="M156.6 94 L100.8 94 L79.6 115.2 L107.5 143.1 Z" fill="#47c5fb"/><path d="M79.6 171 L100.8 192.2 L156.6 192.2 L107.5 143.1 Z" fill="#00569e"/><path d="M51.6 143.1 L79.6 115.2 L107.5 143.1 L79.6 171 Z" fill="#00b5f8"/></svg>
<div class="t" style="left:1906px;top:364.0px;font-size:17px;line-height:20px;color:#000;transform:translate(-50%,-50%) rotate(90deg)">Flutter Inspector</div>
<svg style="left:1899px;top:463px" width="14" height="20" viewBox="9.8 10 146.8 182.2" preserveAspectRatio="none"><path d="M37.7 128.9 L9.8 101 L100.8 10 L156.6 10 Z" fill="#47c5fb"/><path d="M156.6 94 L100.8 94 L79.6 115.2 L107.5 143.1 Z" fill="#47c5fb"/><path d="M79.6 171 L100.8 192.2 L156.6 192.2 L107.5 143.1 Z" fill="#00569e"/><path d="M51.6 143.1 L79.6 115.2 L107.5 143.1 L79.6 171 Z" fill="#00b5f8"/><circle cx="150" cy="178" r="26" fill="#0cc400"/></svg>
<div class="t" style="left:1906px;top:565.0px;font-size:17px;line-height:20px;color:#000;transform:translate(-50%,-50%) rotate(90deg)">Flutter Performance</div>
<svg style="left:1897px;top:897px;" width="15" height="20" viewBox="0 0 15 20"><rect x="1" y="1" width="13" height="18" rx="2" fill="none" stroke="#6e6e6e" stroke-width="1.8"/><rect x="5" y="15" width="5" height="1.4" fill="#6e6e6e"/></svg>
<div class="t" style="left:1906px;top:996.0px;font-size:16.3px;line-height:20px;color:#000;transform:translate(-50%,-50%) rotate(90deg)">Device File Explorer</div>
<div class="a" style="left:1370px;top:966px;width:509px;height:109px;background:#f2f2f2;border:1px solid #c4c4c4;border-radius:3px;box-shadow:0 3px 8px rgba(0,0,0,0.12)"></div>
<div class="a" style="left:1420px;top:1058px;width:85px;height:2px;background:#6f86b0;"></div>
<div class="a" style="left:1237px;top:53px;width:542px;height:1006px;background:#ffffff;border:1px solid #4a4a4a"></div>
<div class="t" style="left:1249px;top:67px;font-size:17.2px;line-height:20px;color:#000;font-weight:normal;font-family:'Liberation Sans';">Android Emulator - Pixel_2_API_29:5554</div>
<div class="a" style="left:1238px;top:98px;width:540px;height:896px;overflow:hidden;background:#fafafa">
<div class="a" style="left:0;top:0;width:540px;height:104px;background:#2196f3;box-shadow:0 2px 5px rgba(0,0,0,0.28)"></div>
<div class="a" style="left:508.3px;top:31.3px;width:220px;height:15.6px;background:rgba(165,10,0,0.68);box-shadow:0 0 6px rgba(0,0,0,0.4);transform:translate(-50%,-50%) rotate(45deg);text-align:center;color:#fff;font-weight:bold;font-size:13.5px;line-height:16px;letter-spacing:0px;font-family:'Liberation Sans'">DEBUG</div>
<div class="a" style="left:0;top:0;width:540px;height:31px;background:rgba(0,0,0,0.26)"></div>
</div>
<div class="t" style="left:1248px;top:105px;font-size:18px;line-height:20px;color:#fff;font-weight:normal;font-family:'Liberation Sans';">2:58</div>
<svg style="left:1299px;top:105px;" width="18" height="18" viewBox="0 0 18 18"><g transform="translate(9 9)"><rect x="-2.16" y="-9.00" width="4.32" height="5.40" rx="0.72" fill="#fff" transform="rotate(0)"/><rect x="-2.16" y="-9.00" width="4.32" height="5.40" rx="0.72" fill="#fff" transform="rotate(60)"/><rect x="-2.16" y="-9.00" width="4.32" height="5.40" rx="0.72" fill="#fff" transform="rotate(120)"/><rect x="-2.16" y="-9.00" width="4.32" height="5.40" rx="0.72" fill="#fff" transform="rotate(180)"/><rect x="-2.16" y="-9.00" width="4.32" height="5.40" rx="0.72" fill="#fff" transform="rotate(240)"/><rect x="-2.16" y="-9.00" width="4.32" height="5.40" rx="0.72" fill="#fff" transform="rotate(300)"/><circle r="6.66" fill="#fff"/><circle r="3.06" fill="#1570b4"/></g></svg>
<svg style="left:1329px;top:105px;" width="15" height="18" viewBox="0 0 15 18"><path d="M5 0 H14 Q15 0 15 1 V17 Q15 18 14 18 H1 Q0 18 0 17 V5 Z" fill="#fff"/><rect x="6" y="2" width="1.3" height="3" fill="#1570b4"/><rect x="8.5" y="2" width="1.3" height="3" fill="#1570b4"/><rect x="11" y="2" width="1.3" height="3" fill="#1570b4"/></svg>
<svg style="left:1356px;top:104px;" width="19" height="19" viewBox="0 0 19 19"><circle cx="9.5" cy="9.5" r="8" fill="none" stroke="#fff" stroke-width="2.2"/><path d="M4.5 6 L13 14.5" stroke="#fff" stroke-width="2.2"/><path d="M6 12 L9 9 L12 12" fill="none" stroke="#fff" stroke-width="1.5"/></svg>
<svg style="left:1730px;top:104px;" width="19" height="17" viewBox="0 0 19 17"><path d="M17.5 1.5 V16 H1.5 Z" fill="none" stroke="#fff" stroke-width="1.6"/></svg>
<svg style="left:1757px;top:103px;" width="11" height="19" viewBox="0 0 11 19"><rect x="3" y="0" width="5" height="2.5" fill="#fff"/><rect x="0" y="2" width="11" height="17" rx="1" fill="#fff"/></svg>
<div class="t" style="left:1259px;top:153px;font-size:24.8px;line-height:30px;color:#fff;font-weight:bold;font-family:'Liberation Sans';">Flutter Demo Home Page</div>
<div class="t" style="left:1324.5px;top:564px;font-size:18.3px;line-height:20px;color:#262626;font-weight:normal;font-family:'Liberation Sans';">You have pushed the button this many times:</div>
<div class="t" style="left:1495px;top:586px;font-size:45px;line-height:50px;color:#757575;font-weight:normal;font-family:'Liberation Sans';">2</div>
<div class="a" style="left:1683px;top:900px;width:73px;height:73px;background:#2196f3;border-radius:50%;box-shadow:0 4px 7px rgba(0,0,0,0.3)"></div>
<div class="a" style="left:1709px;top:935px;width:21px;height:3px;background:#fff;"></div>
<div class="a" style="left:1718px;top:926px;width:3px;height:21px;background:#fff;"></div>
<div class="a" style="left:1238px;top:994px;width:540px;height:64px;background:#000;"></div>
<svg style="left:1340px;top:1014px;" width="20" height="23" viewBox="0 0 20 23"><path d="M19.5 0.5 V22.5 L0.5 11.5 Z" fill="#fff" stroke="#fff" stroke-width="1" stroke-linejoin="round"/></svg>
<div class="a" style="left:1497.5px;top:1016px;width:20px;height:20px;background:#fff;border-radius:50%"></div>
<div class="a" style="left:1653px;top:1016px;width:20px;height:20px;background:#fff;border-radius:2px"></div>
<div class="a" style="left:1779px;top:98px;width:71px;height:559px;background:#eeeeee;border:1px solid #1e1e1e"></div>
<div class="a" style="left:1797px;top:118px;width:7px;height:1.6px;background:#607d8b;"></div>
<svg style="left:1825px;top:114px;" width="9" height="9" viewBox="0 0 9 9"><path d="M0.5 0.5 L8.5 8.5 M8.5 0.5 L0.5 8.5" stroke="#607d8b" stroke-width="1.5"/></svg>
<svg style="left:1804.0px;top:148.0px;" width="20" height="20" viewBox="0 0 20 20"><path d="M5 4.5 A8 8 0 1 0 15 4.5" fill="none" stroke="#607d8b" stroke-width="2.6"/><path d="M10 0 V9" stroke="#607d8b" stroke-width="2.6"/></svg>
<svg style="left:1804.0px;top:195.0px;" width="20" height="20" viewBox="0 0 20 20"><path d="M0 6.5 H4 L9 1.5 V18.5 L4 13.5 H0 Z" fill="#607d8b"/><path d="M11.5 6 Q14 10 11.5 14" fill="none" stroke="#607d8b" stroke-width="2.2"/><path d="M14 2.5 Q19.5 10 14 17.5" fill="none" stroke="#607d8b" stroke-width="2.2"/></svg>
<svg style="left:1804.0px;top:242.0px;" width="20" height="20" viewBox="0 0 20 20"><path d="M3 7 H7 L12 2 V18 L7 13 H3 Z" fill="#607d8b"/><path d="M14 7 Q16 10 14 13" fill="none" stroke="#607d8b" stroke-width="2.2"/></svg>
<svg style="left:1803.0px;top:288.0px;" width="22" height="22" viewBox="0 0 22 22"><g transform="rotate(-45 10 11)"><rect x="4.5" y="3.5" width="11" height="16" rx="1" fill="none" stroke="#607d8b" stroke-width="2.6"/></g><path d="M12 1 Q19 2 20 8" fill="none" stroke="#607d8b" stroke-width="1.4"/></svg>
<svg style="left:1803.0px;top:334.0px;" width="22" height="22" viewBox="0 0 22 22"><g transform="rotate(45 11 11)"><rect x="5.5" y="3.5" width="11" height="16" rx="1" fill="none" stroke="#607d8b" stroke-width="2.6"/></g><path d="M10 1 Q3 2 2 8" fill="none" stroke="#607d8b" stroke-width="1.4"/></svg>
<svg style="left:1804.0px;top:382.0px;" width="20" height="20" viewBox="0 0 20 20"><path d="M0 5 H5 L7 2 H13 L15 5 H20 V18 H0 Z" fill="#607d8b"/><circle cx="10" cy="11" r="4" fill="#eeeeee"/><circle cx="10" cy="11" r="2.2" fill="#607d8b"/></svg>
<svg style="left:1804.0px;top:429.0px;" width="20" height="20" viewBox="0 0 20 20"><circle cx="8" cy="8" r="6" fill="none" stroke="#607d8b" stroke-width="2"/><path d="M12.5 12.5 L19 19" stroke="#607d8b" stroke-width="2.4"/><path d="M8 5 V11 M5 8 H11" stroke="#607d8b" stroke-width="1.6"/></svg>
<svg style="left:1804.0px;top:476.0px;" width="20" height="20" viewBox="0 0 20 20"><path d="M15 2 V18 L3 10 Z" fill="none" stroke="#607d8b" stroke-width="2" stroke-linejoin="round"/></svg>
<svg style="left:1804.0px;top:523.0px;" width="20" height="20" viewBox="0 0 20 20"><circle cx="10" cy="10" r="7.8" fill="none" stroke="#607d8b" stroke-width="2"/></svg>
<svg style="left:1804.0px;top:570.0px;" width="20" height="20" viewBox="0 0 20 20"><rect x="3" y="3" width="14" height="14" fill="none" stroke="#607d8b" stroke-width="2"/></svg>
<svg style="left:1804.0px;top:617.0px;" width="20" height="20" viewBox="0 0 20 20"><circle cx="4" cy="10" r="2" fill="#607d8b"/><circle cx="10" cy="10" r="2" fill="#607d8b"/><circle cx="16" cy="10" r="2" fill="#607d8b"/></svg>
</div></body></html>
